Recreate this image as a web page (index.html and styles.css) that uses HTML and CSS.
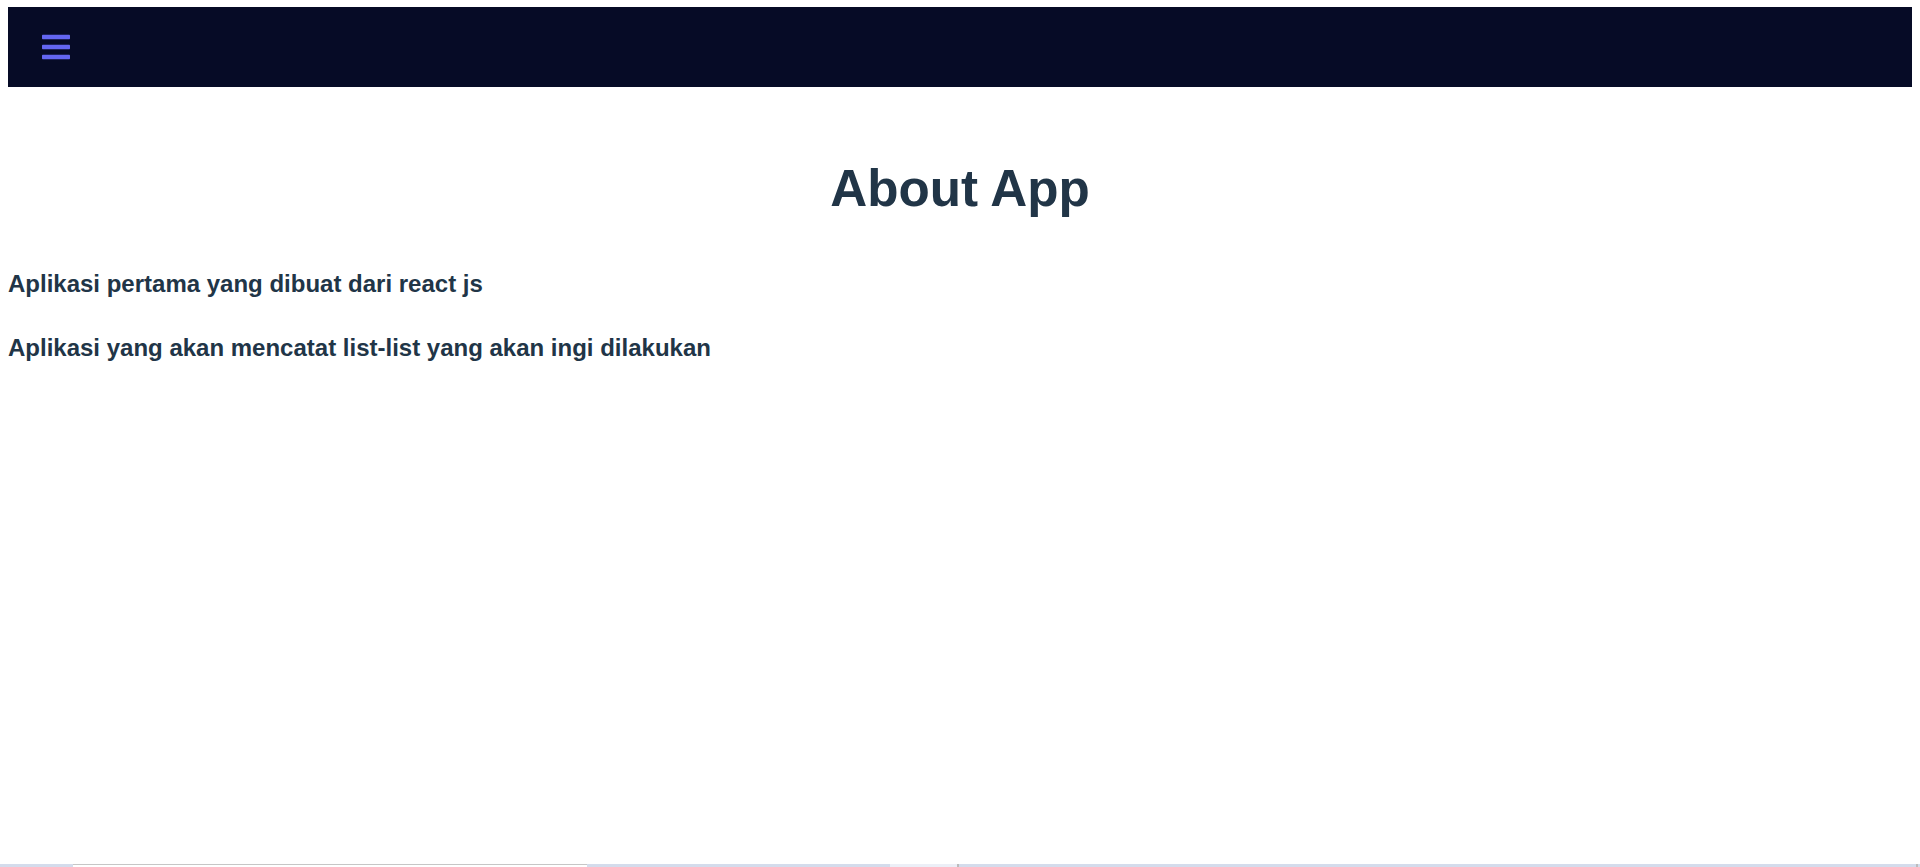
FILE: index.html
```html
<!DOCTYPE html>
<html lang="id">
<head>
<meta charset="utf-8">
<title>About App</title>
<link rel="stylesheet" href="styles.css">
</head>
<body>
<div class="page">
  <nav class="navbar">
    <a class="menu-bars" href="#" aria-label="menu">
      <svg class="bars-icon" viewBox="0 0 448 512" width="28" height="32" aria-hidden="true">
        <path fill="currentColor" d="M16 132h416c8.837 0 16-7.163 16-16V76c0-8.837-7.163-16-16-16H16C7.163 60 0 67.163 0 76v40c0 8.837 7.163 16 16 16zm0 160h416c8.837 0 16-7.163 16-16v-40c0-8.837-7.163-16-16-16H16c-8.837 0-16 7.163-16 16v40c0 8.837 7.163 16 16 16zm0 160h416c8.837 0 16-7.163 16-16v-40c0-8.837-7.163-16-16-16H16c-8.837 0-16 7.163-16 16v40c0 8.837 7.163 16 16 16z"/>
      </svg>
    </a>
  </nav>
  <main class="about">
    <h1 class="about-title">About App</h1>
    <p class="about-text">Aplikasi pertama yang dibuat dari react js</p>
    <p class="about-text">Aplikasi yang akan mencatat list-list yang akan ingi dilakukan</p>
  </main>
</div>
<div class="bottom-strip">
  <span class="seg seg-a"></span>
  <span class="seg seg-b"></span>
  <span class="seg seg-c"></span>
  <span class="seg seg-d"></span>
  <span class="seg seg-line"></span>
  <span class="seg seg-e"></span>
  <span class="seg seg-line"></span>
  <span class="seg seg-f"></span>
</div>
</body>
</html>
```
FILE: styles.css
```css
html, body {
  margin: 0;
  padding: 0;
  background: #ffffff;
}

body {
  font-family: "Liberation Sans", Arial, Helvetica, sans-serif;
  color: #213547;
}

.page {
  padding: 7px 8px 0 8px;
}

.navbar {
  height: 80px;
  background-color: #060b26;
  display: flex;
  align-items: center;
}

.menu-bars {
  margin-left: 34px;
  display: flex;
  color: #6366f1;
}

.bars-icon {
  display: block;
}

.about {
  display: flex;
  flex-direction: column;
}

.about-title {
  margin: 74px 0 49px 0;
  font-size: 51.2px;
  line-height: 1.1;
  font-weight: 700;
  text-align: center;
  color: #213547;
}

.about-text {
  margin: 0 0 28px 0;
  font-size: 24px;
  line-height: 36px;
  font-weight: 700;
  color: #213547;
}

.bottom-strip {
  position: fixed;
  left: 0;
  right: 0;
  bottom: 0;
  height: 3px;
  display: flex;
  background: #d4dcec;
}

.seg { display: block; height: 3px; }
.seg-a { width: 73px; background: #d4dcec; }
.seg-b { width: 514px; background: #ffffff; border-top: 1px solid #c6c6c6; box-sizing: border-box; }
.seg-c { width: 303px; background: #d4dcec; }
.seg-d { width: 67px; background: #eceff7; }
.seg-line { width: 2px; background: #bcbcbc; }
.seg-e { width: 957px; background: #d4dcec; }
.seg-f { flex: 1; background: #d4dcec; }
```
